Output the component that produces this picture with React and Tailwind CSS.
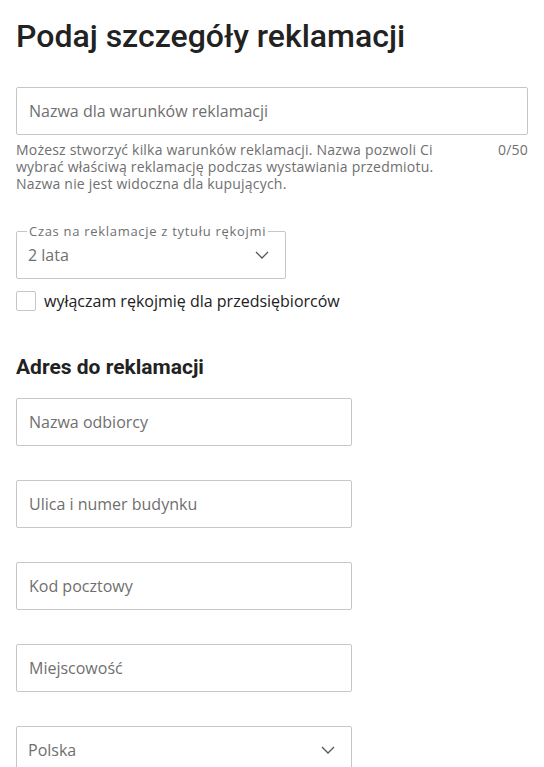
import React, { useState } from "react";

const Chevron = () => (
  <svg width="14" height="8" viewBox="0 0 14 8" fill="none" className="shrink-0">
    <path d="M1 1l6 6 6-6" stroke="#555" strokeWidth="1.3" />
  </svg>
);

const TextField = ({ placeholder }) => (
  <input
    type="text"
    placeholder={placeholder}
    className="w-[336px] h-12 px-3 border border-[#c6c6c6] rounded-[2px] bg-white text-base text-[#222] placeholder:text-[#6f6f6f] focus:outline-none"
  />
);

const App = () => {
  const [name, setName] = useState("");
  const [businessOff, setBusinessOff] = useState(false);

  const addressFields = [
    "Nazwa odbiorcy",
    "Ulica i numer budynku",
    "Kod pocztowy",
    "Miejscowość",
  ];

  return (
    <div className="px-4 pt-4 pb-10 bg-white font-['Open_Sans',sans-serif] text-[#222]">
      <h1 className="font-['Roboto',sans-serif] font-medium text-[32px] leading-[40px] text-[#222]">
        Podaj szczegóły reklamacji
      </h1>

      <div className="mt-[31px]">
        <input
          type="text"
          value={name}
          onChange={(e) => setName(e.target.value.slice(0, 50))}
          placeholder="Nazwa dla warunków reklamacji"
          className="w-full h-12 px-3 border border-[#c6c6c6] rounded-[2px] bg-white text-base text-[#222] placeholder:text-[#6f6f6f] focus:outline-none"
        />
        <div className="mt-1.5 flex justify-between gap-4 text-[14px] leading-[17px] text-[#6f6f6f] tracking-[0.2px]">
          <p className="w-[440px]">
            Możesz stworzyć kilka warunków reklamacji. Nazwa pozwoli Ci wybrać
            właściwą reklamację podczas wystawiania przedmiotu. Nazwa nie jest
            widoczna dla kupujących.
          </p>
          <span>{name.length}/50</span>
        </div>
      </div>

      <div className="relative mt-[39px] w-[270px]">
        <span className="absolute left-[11px] -top-[10px] px-[2px] bg-white text-[13px] leading-[20px] tracking-[0.7px] text-[#6f6f6f]">
          Czas na reklamacje z tytułu rękojmi
        </span>
        <div className="h-12 border border-[#c6c6c6] rounded-[2px] flex items-center justify-between pl-[11px] pr-4 text-base text-[#6f6f6f]">
          <span>2 lata</span>
          <Chevron />
        </div>
      </div>

      <label className="mt-3 flex items-center gap-2 cursor-pointer">
        <input
          type="checkbox"
          checked={businessOff}
          onChange={(e) => setBusinessOff(e.target.checked)}
          className="appearance-none w-5 h-5 border border-[#c6c6c6] rounded-[2px] bg-white checked:bg-[#ff5a00]"
        />
        <span className="text-base leading-5 text-[#222]">
          wyłączam rękojmię dla przedsiębiorców
        </span>
      </label>

      <h2 className="mt-11 font-['Roboto',sans-serif] font-bold text-[21px] leading-6 text-[#222]">
        Adres do reklamacji
      </h2>

      <div className="mt-[19px] flex flex-col gap-[34px]">
        {addressFields.map((f) => (
          <TextField key={f} placeholder={f} />
        ))}
        <div className="w-[336px] h-12 border border-[#c6c6c6] rounded-[2px] flex items-center justify-between pl-[11px] pr-4 text-base text-[#6f6f6f]">
          <span>Polska</span>
          <Chevron />
        </div>
      </div>
    </div>
  );
};

export default App;
